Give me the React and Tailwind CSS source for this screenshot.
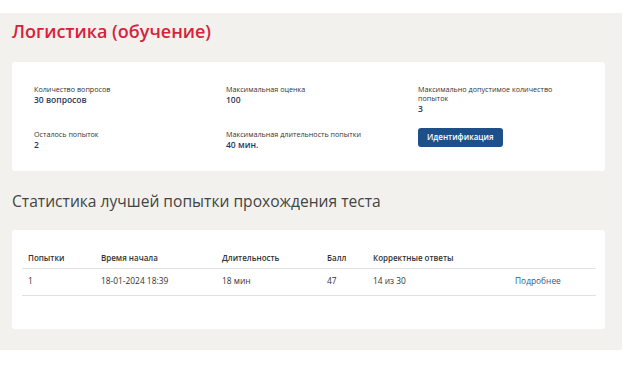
export default function App() {
  const info = [
    { label: 'Количество вопросов', value: '30 вопросов' },
    { label: 'Максимальная оценка', value: '100' },
    { label: 'Максимально допустимое количество попыток', value: '3' },
    { label: 'Осталось попыток', value: '2' },
    { label: 'Максимальная длительность попытки', value: '40 мин.' },
  ];

  return (
    <div className="h-[365px] bg-white pt-[13px] font-['Open_Sans',sans-serif]">
      <div className="h-[337px] w-[622px] bg-[#f2f1ee] px-3 pt-[4px]">
        <h1 className="text-[18px] font-semibold leading-[28px] text-[#d8213c]">Логистика (обучение)</h1>

        <div className="mt-[17px] h-[109px] w-[593px] rounded-[3px] bg-white pl-[22px] pt-[23px]">
          <div className="grid grid-cols-[192px_192px_145px] gap-y-[16px]">
            {info.map((i) => (
              <div key={i.label}>
                <div className="text-[7.2px] leading-[9px] text-[#333]">{i.label}</div>
                <div className="text-[8.5px] font-semibold leading-[11px] text-[#1f3a60]">{i.value}</div>
              </div>
            ))}
            <div className="-mt-[8px]">
              <button className="h-[19px] rounded-[3px] bg-[#1d5089] px-[9px] text-[8px] font-semibold text-white">
                Идентификация
              </button>
            </div>
          </div>
        </div>

        <h2 className="mt-[19px] text-[15.6px] leading-[22px] text-[#444]">Статистика лучшей попытки прохождения теста</h2>

        <div className="mt-[18px] h-[99px] w-[593px] rounded-[3px] bg-white px-[10px] pt-[18px]">
          <table className="w-[574px] text-left text-[8px] text-[#333]">
            <thead>
              <tr className="h-[20px] border-b border-[#e2e2e2]">
                <th className="w-[79px] pl-[6px] font-semibold">Попытки</th>
                <th className="w-[121px] font-semibold">Время начала</th>
                <th className="w-[105px] font-semibold">Длительность</th>
                <th className="w-[46px] font-semibold">Балл</th>
                <th className="w-[142px] font-semibold">Корректные ответы</th>
                <th></th>
              </tr>
            </thead>
            <tbody>
              <tr className="h-[27px] border-b border-[#e2e2e2] text-[8.4px]">
                <td className="pl-[6px]">1</td>
                <td>18-01-2024 18:39</td>
                <td>18 мин</td>
                <td>47</td>
                <td>14 из 30</td>
                <td className="text-[#2b5d8f]">Подробнее</td>
              </tr>
            </tbody>
          </table>
        </div>
      </div>
    </div>
  );
}
